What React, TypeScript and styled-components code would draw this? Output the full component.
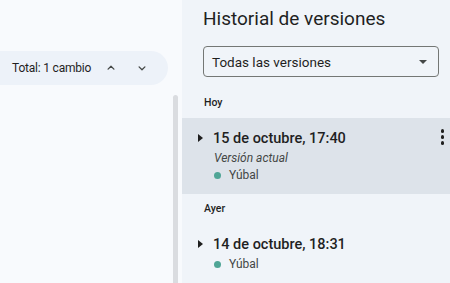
import React from "react";
import styled, { createGlobalStyle } from "styled-components";

const GlobalStyle = createGlobalStyle`
  html, body {
    margin: 0;
    padding: 0;
    width: 450px;
    height: 283px;
    overflow: hidden;
    font-family: "Roboto", "Liberation Sans", sans-serif;
    color: #1f1f1f;
  }
`;

const Page = styled.div`
  display: flex;
  flex-direction: row;
  width: 450px;
  height: 283px;
  background-color: #f8fafd;
`;

const LeftPane = styled.div`
  display: flex;
  flex-direction: row;
  width: 182px;
  flex-shrink: 0;
`;

const LeftContent = styled.div`
  flex: 1;
  padding-top: 51px;
  overflow: hidden;
`;

const ChangesPill = styled.div`
  display: flex;
  flex-direction: row;
  align-items: center;
  width: 188px;
  height: 34px;
  margin-left: -20px;
  padding-left: 32px;
  box-sizing: border-box;
  border-radius: 17px;
  background-color: #edf2f9;
  font-size: 12px;
  letter-spacing: -0.2px;
  color: #1f1f1f;
  white-space: nowrap;
`;

const PillLabel = styled.span`
  flex-shrink: 0;
  margin-right: 10px;
`;

const NavButton = styled.button`
  display: flex;
  align-items: center;
  justify-content: center;
  flex-shrink: 0;
  width: 20px;
  height: 20px;
  padding: 0;
  margin-right: 11px;
  border: 0;
  background: transparent;
  color: #444746;
`;

const ScrollTrack = styled.div`
  width: 5px;
  margin-top: 95px;
  margin-right: 4px;
  border-radius: 3px 3px 0 0;
  background-color: #dadce0;
`;

const RightPane = styled.div`
  flex: 1;
  display: flex;
  flex-direction: column;
  background-color: #f0f4f9;
`;

const Title = styled.h1`
  margin: 0;
  padding: 6px 0 0 21px;
  font-size: 19px;
  font-weight: 400;
  line-height: 26px;
  color: #1f1f1f;
`;

const Select = styled.div`
  display: flex;
  flex-shrink: 0;
  align-items: center;
  justify-content: space-between;
  box-sizing: border-box;
  margin: 14px 11px 0 21px;
  height: 31px;
  padding: 0 11px 0 8px;
  border: 1px solid #747775;
  border-radius: 4px;
  font-size: 13.5px;
  color: #1f1f1f;
`;

const Caret = styled.span`
  width: 0;
  height: 0;
  border-left: 4px solid transparent;
  border-right: 4px solid transparent;
  border-top: 4px solid #444746;
`;

const DayLabel = styled.div<{ first?: boolean }>`
  flex-shrink: 0;
  padding: ${({ first }) => (first ? "19px" : "8px")} 0 9px 22px;
  font-size: 10.5px;
  font-weight: 500;
  color: #1f1f1f;
`;

const VersionRow = styled.div<{ selected?: boolean }>`
  position: relative;
  flex-shrink: 0;
  display: flex;
  flex-direction: column;
  padding: 10px 0 12px 16px;
  background-color: ${({ selected }) => (selected ? "#dde3ea" : "transparent")};
`;

const VersionHead = styled.div`
  display: flex;
  align-items: center;
  height: 20px;
`;

const Expand = styled.span`
  width: 0;
  height: 0;
  margin-right: 10px;
  border-top: 4px solid transparent;
  border-bottom: 4px solid transparent;
  border-left: 5px solid #1f1f1f;
`;

const VersionDate = styled.span`
  font-size: 14.5px;
  font-weight: 500;
  color: #1f1f1f;
`;

const Current = styled.div`
  margin: 3px 0 0 16px;
  font-size: 12px;
  font-style: italic;
  color: #444746;
`;

const Author = styled.div`
  display: flex;
  align-items: center;
  margin: 3px 0 0 16px;
  font-size: 12px;
  color: #444746;
`;

const Dot = styled.span`
  width: 7px;
  height: 7px;
  margin-right: 8px;
  border-radius: 50%;
  background-color: #4fa596;
`;

const MoreButton = styled.div`
  position: absolute;
  top: 11px;
  right: 6px;
  display: flex;
  flex-direction: column;
  gap: 2.5px;
  span {
    width: 3.5px;
    height: 3.5px;
    border-radius: 50%;
    background-color: #1f1f1f;
  }
`;

const Chevron: React.FC<{ up?: boolean }> = ({ up }) => (
  <svg width="14" height="14" viewBox="0 0 24 24" fill="none">
    <path
      d={up ? "M7 14l5-5 5 5" : "M7 10l5 5 5-5"}
      stroke="currentColor"
      strokeWidth="2.2"
      strokeLinecap="round"
      strokeLinejoin="round"
    />
  </svg>
);

interface Version {
  day: string;
  date: string;
  author: string;
  current?: boolean;
}

const versions: Version[] = [
  { day: "Hoy", date: "15 de octubre, 17:40", author: "Yúbal", current: true },
  { day: "Ayer", date: "14 de octubre, 18:31", author: "Yúbal" },
];

const App: React.FC = () => {
  return (
    <>
      <GlobalStyle />
      <Page>
        <LeftPane>
          <LeftContent>
            <ChangesPill>
              <PillLabel>Total: 1 cambio</PillLabel>
              <NavButton>
                <Chevron up />
              </NavButton>
              <NavButton>
                <Chevron />
              </NavButton>
            </ChangesPill>
          </LeftContent>
          <ScrollTrack />
        </LeftPane>
        <RightPane>
          <Title>Historial de versiones</Title>
          <Select>
            Todas las versiones
            <Caret />
          </Select>
          {versions.map((v, index) => (
            <React.Fragment key={v.date}>
              <DayLabel first={index === 0}>{v.day}</DayLabel>
              <VersionRow selected={v.current}>
                <VersionHead>
                  <Expand />
                  <VersionDate>{v.date}</VersionDate>
                </VersionHead>
                {v.current && <Current>Versión actual</Current>}
                <Author>
                  <Dot />
                  {v.author}
                </Author>
                {v.current && (
                  <MoreButton>
                    <span />
                    <span />
                    <span />
                  </MoreButton>
                )}
              </VersionRow>
            </React.Fragment>
          ))}
        </RightPane>
      </Page>
    </>
  );
};

export default App;
